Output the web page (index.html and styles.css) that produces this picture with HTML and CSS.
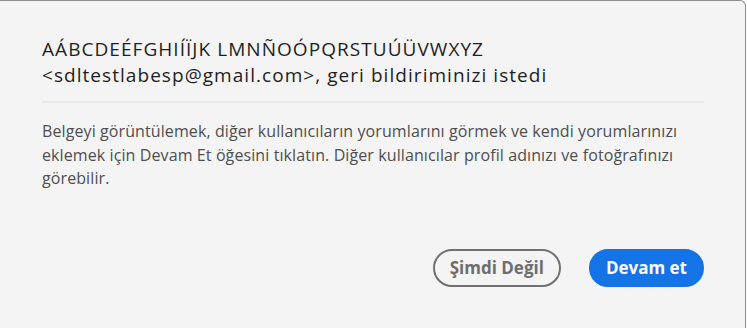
FILE: index.html
```html
<!DOCTYPE html>
<html lang="tr">

<head>
    <meta charset="UTF-8">
    <meta name="viewport" content="width=device-width, initial-scale=1.0">
    <title>Geri bildirim</title>
    <link rel="stylesheet" href="styles.css">
</head>

<body>
    <div class="dialog">
        <h1 class="title">
            <span class="title-line">AÁBCDEÉFGHIÍÏJK LMNÑOÓPQRSTUÚÜVWXYZ</span>
            <span class="title-line">&lt;sdltestlabesp@gmail.com&gt;, geri bildiriminizi istedi</span>
        </h1>
        <hr class="divider">
        <p class="message">Belgeyi görüntülemek, diğer kullanıcıların yorumlarını görmek ve kendi yorumlarınızı eklemek için Devam Et öğesini tıklatın. Diğer kullanıcılar profil adınızı ve fotoğrafınızı görebilir.</p>
        <div class="actions">
            <button class="btn btn-secondary">Şimdi Değil</button>
            <button class="btn btn-primary">Devam et</button>
        </div>
    </div>
</body>

</html>
```

FILE: styles.css
```css
body {
    margin: 0;
    background-color: #fff;
    font-family: "Open Sans", "Noto Sans", sans-serif;
}

.dialog {
    box-sizing: border-box;
    width: 746px;
    height: 328px;
    padding: 35px 41px 0 42px;
    background-color: #f4f4f4;
    border-top: 1px solid #8c8c8c;
    border-right: 1px solid #8c8c8c;
    border-top-right-radius: 6px;
}

.title {
    margin: 0;
    font-size: 19px;
    font-weight: 500;
    letter-spacing: 1.05px;
    line-height: 26px;
    color: #1f1f1f;
}

.title-line {
    display: block;
}

.divider {
    margin: 13px 0 0 0;
    height: 2px;
    border: none;
    background-color: #e8e8e8;
}

.message {
    margin: 17px 0 0 0;
    font-size: 16px;
    letter-spacing: 0.1px;
    line-height: 23.5px;
    color: #4e4e4e;
}

.actions {
    display: flex;
    justify-content: flex-end;
    gap: 28px;
    margin-top: 58px;
}

.btn {
    height: 38px;
    padding: 0 15px;
    border-radius: 19px;
    font-family: inherit;
    font-size: 17px;
    font-weight: 700;
    cursor: pointer;
}

.btn-secondary {
    border: 2px solid #707070;
    background: transparent;
    color: #6e6e6e;
}

.btn-primary {
    border: 2px solid #1473e6;
    background-color: #1473e6;
    color: #fff;
}
```
